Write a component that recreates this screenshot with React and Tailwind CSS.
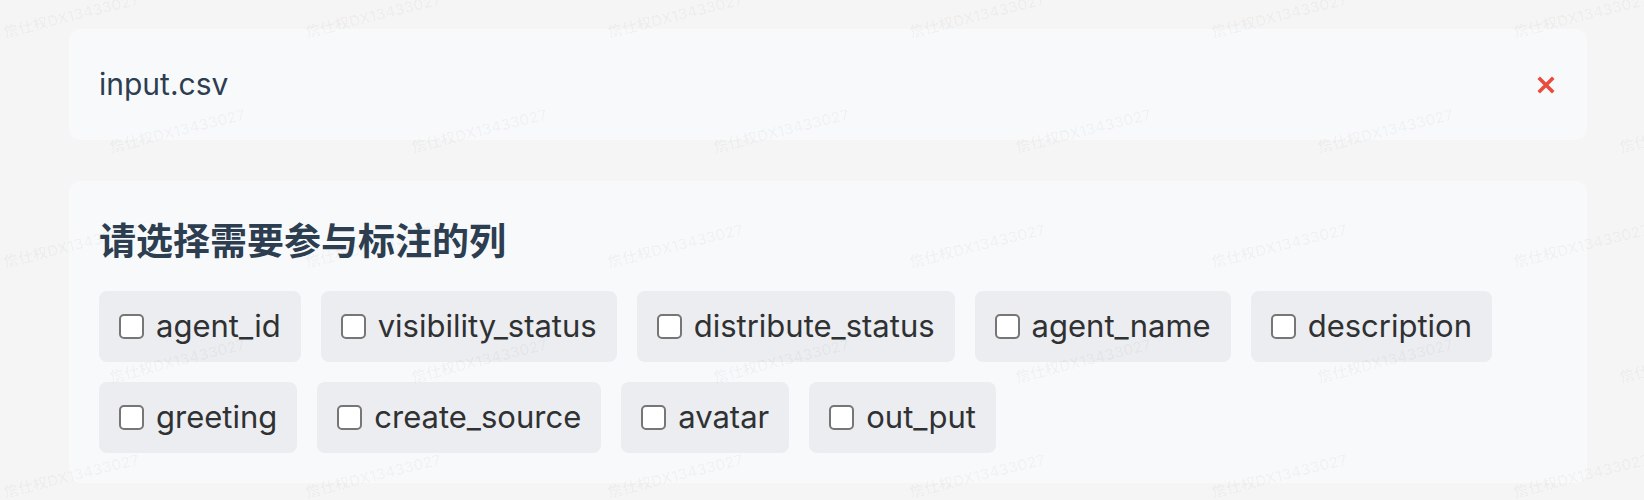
const columns = [
  ["agent_id", "visibility_status", "distribute_status", "agent_name", "description"],
  ["greeting", "create_source", "avatar", "out_put"],
];

const marks = [];
for (let r = 0; r < 5; r++) {
  for (let c = 0; c < 6; c++) {
    marks.push({ top: r * 115 + 22, left: c * 302 + (r % 2 ? 110 : 4) });
  }
}

const Watermark = () => (
  <div className="pointer-events-none absolute inset-0 overflow-hidden">
    {marks.map((m, i) => (
      <span
        key={i}
        className="absolute whitespace-nowrap text-[15px] font-semibold text-black/[0.035] -rotate-[14deg] origin-left"
        style={{ top: m.top, left: m.left }}
      >
        詹仕权DX13433027
      </span>
    ))}
  </div>
);

const Chip = ({ label }) => (
  <label className="flex h-[71px] items-center gap-3 rounded-lg bg-[#ebedf0] px-5 text-[31px] text-[#303133]">
    <input
      type="checkbox"
      className="h-[25px] w-[25px] appearance-none rounded-[5px] border-2 border-[#767676] bg-white"
    />
    <span>{label}</span>
  </label>
);

export default function App() {
  return (
    <div
      className="relative min-h-[500px] bg-[#f5f5f5] pl-[69px] pr-[57px] pt-[29px]"
      style={{ fontFamily: 'Inter, "Noto Sans CJK SC", sans-serif' }}
    >
      <div className="flex h-[111px] items-center justify-between rounded-xl bg-[#f8f9fb] pl-[30px] pr-[32px]">
        <span className="text-[30px] text-[#2c3e50]">input.csv</span>
        <svg width="18" height="18" viewBox="0 0 18 18">
          <path d="M3 3 L15 15 M15 3 L3 15" stroke="#e74c3c" strokeWidth="3.6" strokeLinecap="square" />
        </svg>
      </div>

      <div className="mt-[41px] rounded-xl bg-[#f8f9fb] px-[30px] pb-[30px] pt-[41px]">
        <h2 className="mb-[29px] text-[37px] font-bold leading-10 text-[#2c3e50]">请选择需要参与标注的列</h2>
        <div className="flex flex-col gap-5">
          {columns.map((row, i) => (
            <div key={i} className="flex flex-wrap gap-5">
              {row.map((c) => (
                <Chip key={c} label={c} />
              ))}
            </div>
          ))}
        </div>
      </div>
      <Watermark />
    </div>
  );
}
